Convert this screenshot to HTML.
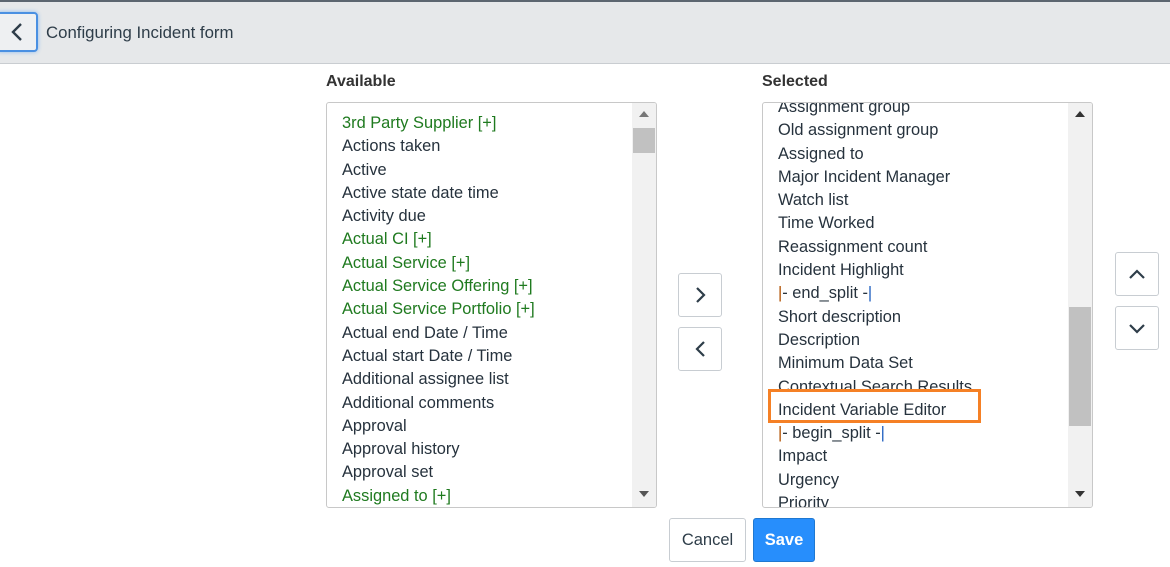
<!DOCTYPE html>
<html><head><style>
*{margin:0;padding:0;box-sizing:border-box}
body{width:1170px;height:567px;background:#fff;font-family:"Liberation Sans",sans-serif;color:#2e3d49;position:relative;overflow:hidden}
.hdr{position:absolute;left:0;top:0;width:1170px;height:64px;background:#e6e8ea;border-top:2px solid #5c6670;border-bottom:1px solid #c9cdd1}
.back{position:absolute;left:-4px;top:12px;width:42px;height:40px;border:2px solid #4a90e2;border-radius:4px;background:#eef0f2;box-shadow:0 0 4px #8cbcf0}
.title{position:absolute;left:46px;top:23px;font-size:16.8px;color:#2e3d49}
.lbl{position:absolute;top:73px;font-size:16px;font-weight:bold;color:#333}
.box{position:absolute;top:102px;width:331px;height:406px;border:1px solid #c8c8c8;border-radius:3px;overflow:hidden;background:#fff}
.sb{position:absolute;right:0;top:0;width:24px;height:100%;background:#f1f1f1}
.thumb{position:absolute;left:1px;width:22px;background:#c1c1c1}
.items{position:absolute;left:15px;font-size:16.4px;line-height:23.3px;white-space:nowrap;color:#26323d}
.g{color:#1f7a1f}
.btn{position:absolute;width:44px;height:44px;border:1px solid #c8cdd2;border-radius:3px;background:#fff}
.tri{position:absolute;left:7px;width:0;height:0;border-left:5px solid transparent;border-right:5px solid transparent}
</style></head><body>
<div class="hdr"></div>
<div class="back"><svg width="38" height="36" viewBox="0 0 38 36" style="position:absolute;left:0;top:0"><path d="M23 10 L15 18 L23 26" fill="none" stroke="#2e3d49" stroke-width="2.4"/></svg></div>
<div class="title">Configuring Incident form</div>
<div class="lbl" style="left:326px">Available</div>
<div class="lbl" style="left:762px">Selected</div>

<div class="box" style="left:326px">
<div class="items" style="top:9px">
<div class="g">3rd Party Supplier [+]</div><div>Actions taken</div><div>Active</div><div>Active state date time</div><div>Activity due</div><div class="g">Actual CI [+]</div><div class="g">Actual Service [+]</div><div class="g">Actual Service Offering [+]</div><div class="g">Actual Service Portfolio [+]</div><div>Actual end Date / Time</div><div>Actual start Date / Time</div><div>Additional assignee list</div><div>Additional comments</div><div>Approval</div><div>Approval history</div><div>Approval set</div><div class="g">Assigned to [+]</div>
</div>
<div class="sb"><div class="tri" style="top:8px;border-bottom:6px solid #777"></div><div class="thumb" style="top:25px;height:25px"></div><div class="tri" style="bottom:10px;border-top:6px solid #555"></div></div>
</div>

<div class="box" style="left:762px">
<div class="items" style="top:-7px">
<div>Assignment group</div><div>Old assignment group</div><div>Assigned to</div><div>Major Incident Manager</div><div>Watch list</div><div>Time Worked</div><div>Reassignment count</div><div>Incident Highlight</div><div><span style="color:#b05000">|</span>- end_split -<span style="color:#2060c0">|</span></div><div>Short description</div><div>Description</div><div>Minimum Data Set</div><div>Contextual Search Results</div><div>Incident Variable Editor</div><div><span style="color:#b05000">|</span>- begin_split -<span style="color:#2060c0">|</span></div><div>Impact</div><div>Urgency</div><div>Priority</div>
</div>
<div class="sb"><div class="tri" style="top:8px;border-bottom:6px solid #333"></div><div class="thumb" style="top:204px;height:119px"></div><div class="tri" style="bottom:10px;border-top:6px solid #333"></div></div>
</div>
<div style="position:absolute;left:768px;top:389px;width:213px;height:34px;border:3px solid #f58025"></div>

<div class="btn" style="left:678px;top:273px"><svg width="42" height="42"><path d="M18 14 L25 21 L18 28" fill="none" stroke="#2e3d49" stroke-width="2.2"/></svg></div>
<div class="btn" style="left:678px;top:327px"><svg width="42" height="42"><path d="M25 14 L18 21 L25 28" fill="none" stroke="#2e3d49" stroke-width="2.2"/></svg></div>
<div class="btn" style="left:1115px;top:252px"><svg width="42" height="42"><path d="M14 25 L21 18 L28 25" fill="none" stroke="#2e3d49" stroke-width="2.2"/></svg></div>
<div class="btn" style="left:1115px;top:306px"><svg width="42" height="42"><path d="M14 18 L21 25 L28 18" fill="none" stroke="#2e3d49" stroke-width="2.2"/></svg></div>

<div style="position:absolute;left:669px;top:518px;width:77px;height:44px;border:1px solid #c8cdd2;border-radius:3px;font-size:16.5px;line-height:42px;text-align:center;color:#2e3d49">Cancel</div>
<div style="position:absolute;left:753px;top:518px;width:62px;height:44px;border:1px solid #1f78d1;border-radius:3px;background:#278efc;font-size:16.5px;font-weight:bold;line-height:42px;text-align:center;color:#fff">Save</div>
</body></html>
